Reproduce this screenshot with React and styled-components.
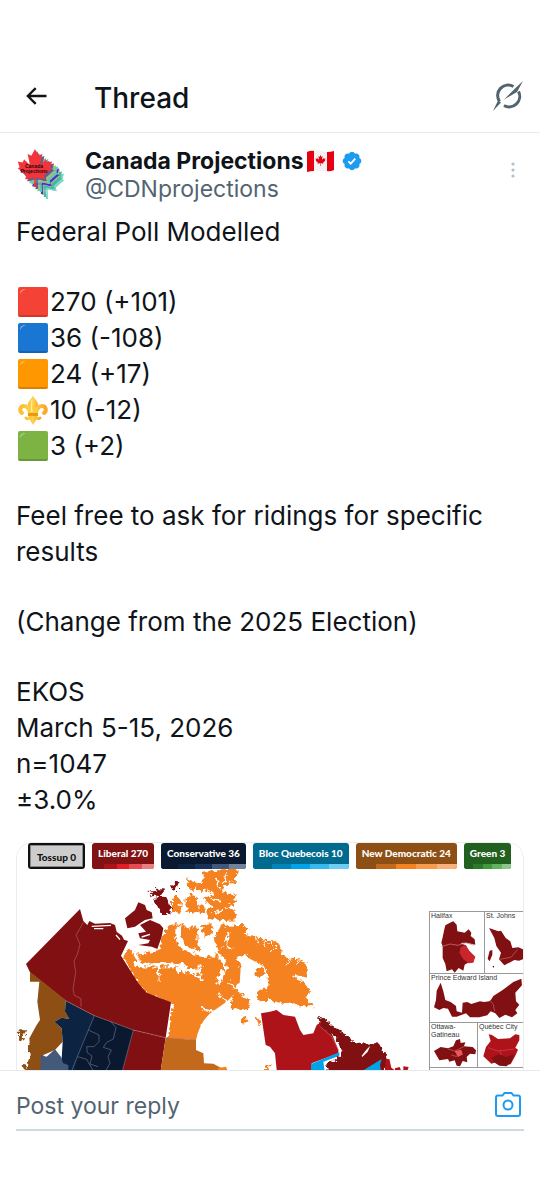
import React from "react";
import styled, { createGlobalStyle } from "styled-components";
import { FaCanadianMapleLeaf } from "react-icons/fa";

const GlobalStyle = createGlobalStyle`
  * {
    box-sizing: border-box;
  }

  body {
    margin: 0;
    background: #fff;
    color: #0f1419;
    font-family: Inter, "Liberation Sans", sans-serif;
  }
`;

const Page = styled.div`
  display: flex;
  flex-direction: column;
  height: 100vh;
  padding-top: 64px;
`;

const Header = styled.header`
  display: flex;
  align-items: center;
  flex: none;
  height: 69px;
  padding: 0 16px 4px 22px;
  border-bottom: 1px solid #e6eaed;

  h1 {
    flex: 1;
    margin: 4px 0 0 44px;
    font-size: 28px;
    line-height: 36px;
    font-weight: 500;
  }
`;

const IconButton = styled.button`
  display: flex;
  flex: none;
  padding: 0;
  border: 0;
  background: none;
  color: ${(props) => props.$color || "#0f1419"};
  cursor: pointer;
`;

const Post = styled.main`
  flex: 1;
  min-height: 0;
  overflow: hidden;
  padding: 14px 16px 0;
`;

const Author = styled.div`
  display: flex;
  align-items: flex-start;
  height: 67px;
`;

const Names = styled.div`
  flex: 1;
  margin-left: 17px;
  font-size: 23px;
  line-height: 28px;
`;

const Name = styled.div`
  display: flex;
  align-items: center;
  font-weight: 700;

  svg {
    margin-left: 2px;
  }

  svg:last-child {
    margin-left: 7px;
  }
`;

const Handle = styled.a`
  color: #536471;
  text-decoration: none;
`;

const More = styled(IconButton)`
  margin: 14px 8px 0 0;
`;

const Body = styled.div`
  display: flex;
  flex-direction: column;
  gap: 34px;
  font-size: 26px;
  line-height: 36px;

  p {
    margin: 0;
  }
`;

const Seat = styled.div`
  display: flex;
  align-items: center;
  height: 36px;
`;

const Media = styled.figure`
  position: relative;
  margin: 24px 0 0;
  overflow: hidden;
  border-radius: 16px;

  &::after {
    content: "";
    position: absolute;
    inset: 0;
    border: 1px solid #e9edf0;
    border-radius: 16px;
    pointer-events: none;
  }
`;

const MapImage = styled.svg`
  display: block;
  width: 100%;
`;

const Legend = styled.div`
  position: absolute;
  z-index: 1;
  top: 1px;
  left: 12px;
  display: flex;
  gap: 7px;
  font-family: Lato, "Open Sans", sans-serif;
  font-size: 10px;
  line-height: 21px;
  font-weight: 900;
  white-space: nowrap;
`;

const Tossup = styled.div`
  height: 26px;
  padding: 0 7px;
  border: 2px solid #111;
  border-radius: 3px;
  background: #cdcdcd;
  box-shadow: inset 0 0 0 1px #8a8a8a;
  color: #111;
  line-height: 24px;
`;

const Party = styled.div`
  overflow: hidden;
  height: 26px;
  border-radius: 3px;
  background: ${(props) => props.$color};
  color: #fff;

  span {
    display: block;
    padding: 0 6px;
  }
`;

const Shades = styled.div`
  display: grid;
  grid-template-columns: repeat(5, 1fr);
  height: 5px;
`;

const Shade = styled.i`
  background: ${(props) => props.$color};
`;

const Insets = styled.div`
  position: absolute;
  top: 69px;
  right: 0;
  width: 95px;
  border-left: 1px solid #999;
  background: #fff;
`;

const InsetRow = styled.div`
  display: grid;
  grid-template-columns: ${(props) => props.$columns};
  height: ${(props) => props.$height}px;
  border-top: 1px solid #999;
`;

const Inset = styled.div`
  display: grid;
  overflow: hidden;

  & + & {
    border-left: 1px solid #999;
  }

  span,
  svg {
    grid-area: 1 / 1;
  }

  span {
    padding-left: 1px;
    color: #333;
    font-family: "Liberation Sans", sans-serif;
    font-size: 7px;
    line-height: 8px;
    white-space: pre-line;
  }
`;

const Reply = styled.form`
  flex: none;
  height: 130px;
  padding: 12px 16px 0;
  border-top: 1px solid #e6eaed;
  background: #fff;
`;

const ReplyField = styled.div`
  display: flex;
  align-items: center;
  height: 48px;
  padding-right: 3px;
  border-bottom: 2px solid #cfd9e0;

  input {
    flex: 1;
    min-width: 0;
    padding: 0;
    border: 0;
    outline: 0;
    background: none;
    color: #0f1419;
    font: 400 23px/28px Inter, "Liberation Sans", sans-serif;
  }

  input::placeholder {
    color: #536471;
    opacity: 1;
  }

  button {
    padding-bottom: 4px;
  }
`;

const parties = [
  {
    name: "Liberal 270",
    shades: ["#811315", "#ae131a", "#e21e24", "#e54b50", "#ea7f82"]
  },
  {
    name: "Conservative 36",
    shades: ["#0a1930", "#0c2342", "#16325b", "#42587a", "#72829b"]
  },
  {
    name: "Bloc Quebecois 10",
    shades: ["#006a8f", "#0085ba", "#00a4e8", "#38b9ee", "#6dcdf5"]
  },
  {
    name: "New Democratic 24",
    shades: ["#8e4f15", "#c2691b", "#f58220", "#f79b4d", "#f9b27c"]
  },
  {
    name: "Green 3",
    shades: ["#21601f", "#2b7a2c", "#3f9a3a", "#62b25f", "#8cc68a"]
  }
];

const seats = [
  { color: "#f44336", text: "270 (+101)" },
  { color: "#1976d2", text: "36 (-108)" },
  { color: "#ff9800", text: "24 (+17)" },
  { text: "10 (-12)" },
  { color: "#7cb342", text: "3 (+2)" }
];

function Square({ color }) {
  return (
    <svg width="34" height="34" viewBox="0 0 34 34" aria-hidden="true">
      <rect x="2" y="2" width="30" height="30" rx="2" fill={color} />
      <path d="M2 30h30q0 2-2 2H4q-2 0-2-2z" fill="#000" opacity=".15" />
      <path d="M4 9q0-5 6-5-4 1-6 5z" fill="#fff" opacity=".5" />
    </svg>
  );
}

function FleurDeLis() {
  return (
    <svg width="34" height="34" viewBox="0 0 34 34" aria-hidden="true">
      <defs>
        <linearGradient id="gold" x2="1" y2="0">
          <stop offset="0" stopColor="#fbc02d" />
          <stop offset=".5" stopColor="#ffd54f" />
          <stop offset="1" stopColor="#f9a825" />
        </linearGradient>
      </defs>
      <path
        d="M17 2c1 4 5 6 5 10 0 4-3 6-4 10h-2c-1-4-4-6-4-10 0-4 4-6 5-10z"
        fill="url(#gold)"
      />
      <g fill="none" stroke="url(#gold)" strokeWidth="4" strokeLinecap="round">
        <path d="M14 21c0-5-3-8-6-8-4 0-5 5-2 7M20 21c0-5 3-8 6-8 4 0 5 5 2 7" />
        <path d="M14 24c-1 2-3 2-4 1M20 24c1 2 3 2 4 1" strokeWidth="3" />
      </g>
      <path d="M15 23h4l1 4-3 5-3-5z" fill="url(#gold)" />
      <path d="M12 20h10v3H12z" fill="#e89a13" />
      <path d="M16 7c-1 4-1 8 0 12" stroke="#fff3a8" strokeWidth="1" fill="none" />
    </svg>
  );
}

function Avatar() {
  const layers = [
    [12, 12, "#7ad7c4"],
    [10, 10, "#4bb3a5"],
    [8, 8, "#86c98b"],
    [7, 7, "#5a2bc4"],
    [6, 5, "#63c5b5"],
    [4, 4, "#91c48d"],
    [2, 2, "#6b5a8a"]
  ];

  return (
    <svg width="52" height="54" viewBox="0 0 52 54" aria-hidden="true">
      {layers.map(([x, y, color]) => (
        <FaCanadianMapleLeaf key={x} x={x} y={y + 2} size={38} color={color} />
      ))}
      <FaCanadianMapleLeaf x={0} y={2} size={38} color="#f5333a" />
      <g
        fill="#1c0a0c"
        fontFamily="Liberation Sans, sans-serif"
        fontWeight="700"
        fontSize="5"
        textAnchor="middle"
      >
        <text x="18" y="21">Canada</text>
        <text x="18" y="26">Projections</text>
      </g>
    </svg>
  );
}

function Flag() {
  return (
    <svg width="29" height="24" viewBox="0 0 29 24" aria-hidden="true">
      <path d="M1 3q7-3 14-1t13 0v19q-7 2-13 1t-14 1z" fill="#f2f2f2" />
      <path d="M1 3q4-2 7-1v20q-4 0-7 1zM21 3q4 0 7-1v19q-4 2-7 1z" fill="#e60012" />
      <FaCanadianMapleLeaf x={9} y={6} size={11} color="#e60012" />
    </svg>
  );
}

function CanadaMap() {
  // drawn at three units to the pixel
  return (
    <MapImage viewBox="48 21 1524 780" aria-label="Projected ridings map">
      <defs>
        <filter
          id="coast"
          x="-5%"
          y="-5%"
          width="110%"
          height="110%"
          colorInterpolationFilters="sRGB"
        >
          <feTurbulence baseFrequency="0.05" numOctaves="2" seed="8" />
          <feDisplacementMap
            in="SourceGraphic"
            scale="22"
            xChannelSelector="R"
            yChannelSelector="G"
          />
        </filter>
      </defs>
      <rect x="48" y="21" width="1524" height="780" fill="#fff" />

      <g fill="#f58220" filter="url(#coast)">
        <path d="M382 325L363 362 415 445 440 473 513 502 497 608 588 615 592 592 606 560 640 525 665 495 682 465 706 450 722 425 702 405 718 385 700 365 745 345 722 300 705 325 690 350 660 345 630 362 590 350 600 322 580 280 555 270 525 262 505 268 490 280 472 342 415 352z" />
        <path d="M662 270L700 265 725 264 740 278 722 290 750 295 785 308 815 310 832 328 840 352 860 365 890 366 914 378 914 422 868 412 914 445 924 465 908 478 938 508 890 508 840 495 800 488 766 490 768 468 800 450 796 410 776 380 750 375 730 350 700 362 655 362 640 350 668 330 656 300z" />
        <path d="M600 380L640 378 660 392 685 368 710 372 722 410 700 440 685 445 705 475 745 500 740 520 690 512 660 535 605 560 560 500z" />
        <path d="M605 103L706 103 704 140 668 145 660 165 700 175 700 205 665 212 700 218 704 250 660 252 622 246 612 220 636 205 605 190 636 170 605 150z" />
        <path d="M688 18L712 20 712 60 706 110 680 110z" />
        <path d="M555 125L572 132 585 150 575 165 560 150zM582 150L600 138 614 158 600 172zM550 188L585 183 590 224 560 228zM510 183L530 178 540 200 534 228 510 224zM590 200L608 205 606 234 590 225zM560 170l20 4-2 12-16-4z" />
        <path d="M550 285L580 262 592 290 585 325 560 320zM600 265L632 262 630 290 605 300zM650 270L668 265 665 330 645 345 638 300z" />
      </g>

      <g fill="none" stroke="#fff" filter="url(#coast)">
        <path d="M372 322Q425 365 404 376T480 385 540 395 600 400" strokeWidth="12" />
        <path d="M470 385l3 46M592 382l5 42M545 400l-10-20M570 405l30 25" strokeWidth="6" />
        <path d="M530 268Q520 320 565 340T630 345" strokeWidth="17" />
        <path d="M598 275Q580 320 615 350M640 268Q620 320 650 355T670 400M665 400l-14 40" strokeWidth="11" />
        <path d="M678 284Q668 320 690 335" strokeWidth="6" />
        <path d="M645 470l30 18M668 485l22 32M600 515l40 10M680 435l38 30" strokeWidth="5" />
        <path d="M760 300l8 22M784 306l8 22M805 312l8 18M825 330l-12 12M865 368l-10 14M890 370l-8 14" strokeWidth="3" />
        <path d="M640 120l14 36M672 112l-6 26M690 130l-12 18M625 185l30 6M640 228l22-8" strokeWidth="5" />
      </g>
      <path d="M588 615Q600 555 640 528L680 500 740 440Q770 420 790 450L768 470 770 495 830 500 850 525 800 530 783 535 797 630Q826 650 826 708L700 708 650 690 620 688 610 655 588 645z" fill="#fff" />
      <path d="M722 400L737 365 775 385 762 410 785 420 796 402 798 448 766 468 740 480 718 460z" fill="#fff" />
      <g fill="#f58220" filter="url(#coast)">
        <path d="M762 390l18 0 8 20-14 12-14-10zM720 540l14-5 2 18-18 8zM765 543l8-5 5 20-8 8zM695 455l52 40-8 26-54-6z" />
        <path d="M768 470l44-14 8 36-46 0zM790 690l16-8-4 20-14 6z" />
      </g>

      <g fill="#811013">
        <path d="M240 222L250 258 262 270 268 258 285 266 330 264 345 270 350 290 366 302 372 314 384 318 363 362 415 445 440 473 513 502 497 608 400 585 283 542 197 497 90 412 78 387z" />
        <path d="M415 202L435 210 440 225 455 232 458 250 435 255 420 265 405 275 382 280 375 250 405 225z" />
        <path d="M420 270L450 255 480 268 490 280 485 305 472 342 455 335 415 330 445 325 450 315 420 310 415 295 438 290z" />
      </g>
      <g fill="#811013" filter="url(#coast)">
        <path d="M442 168l23-13 25 3-12 14-24 6zM508 148l18-14 8 4-8 20-16 4zM455 188l20-8 24 6 9 24-3 18-20 6-10-18-16-12zM470 158l14 8-10 14-12-4z" />
      </g>
      <path d="M275 274l58-3M282 281l28 0M348 300l12 14M425 306l25-8" stroke="#fff" strokeWidth="4" />
      <g fill="#8e4f15">
        <path d="M90 410L197 495 195 530 208 552 185 548 163 560 185 580 188 620 165 645 130 660 130 801 70 801 85 690 92 660 88 610 110 570 120 555 112 500 118 440 90 440z" />
      </g>
      <g fill="#8e4f15" filter="url(#coast)">
        <path d="M50 578l14-5 8 8-8 24-12 8zM66 690l18-6 10 24-18 4z" />
        <path d="M86 610l22 0 0 90-20 0-8-30 12-14-14-20z" />
      </g>
      <path d="M197 497L283 542 400 585 367 801 205 801 185 672 188 620 185 580 163 560 185 548 208 552 195 530z" fill="#0c2342" />
      <path d="M283 542L400 585 367 801 205 801 232 665z" fill="#0a1930" />
      <path d="M122 660L140 665 165 643 185 668 188 684 205 690 207 801 122 801z" fill="#435a7a" />
      <path d="M400 585L497 608 482 708 475 801 350 801 367 708z" fill="#811013" />
      <path d="M497 608L588 615 588 645 610 655 612 685 640 686 680 708 680 801 470 801 482 708z" fill="#c2691b" />
      <path d="M654 699l24-4 8 20-30 0z" fill="#f58220" />
      <g fill="none" stroke="#b8767a" strokeWidth="2" opacity=".8">
        <path d="M250 262l-10 18-12 20 12 28-8 30-10 20 5 35-8 50 4 18 20 10v24M197 497l86 45 117 43 97 23 91 7" />
      </g>
      <g fill="none" stroke="#7a8aa3" strokeWidth="2" opacity=".8">
        <path d="M283 542l-51 123-17 43M400 585l-33 123M265 585l32 15v20l-15 15-22 0 2 18 14 10-6 24 24 8M232 665l28 8 20 35M332 560l16 18-8 34-20 10-10 15 24 8-10 20 6 20-14 24" />
      </g>

      <path d="M783 535L810 530 830 525 850 540 885 545 900 585 910 600 940 595 950 570 965 560 995 595 1015 645 1015 655 935 685 935 801 830 801 830 705 825 655 810 635 797 630z" fill="#ad1319" />
      <path d="M933 687L1018 652 1018 662 970 680 978 740 933 740z" fill="#00a2e8" />
      <g fill="#811013" filter="url(#coast)">
        <path d="M948 535L985 560 1025 590 1055 613 1090 622 1134 626 1160 660 1152 690 1150 801 1070 801 980 780 976 685 1022 652 1002 600 955 570z" />
      </g>
      <path d="M958 572L995 605 1015 645" fill="none" stroke="#c0666a" strokeWidth="2" />
      <path d="M1075 715L1145 672 1140 690 1148 740 1075 740z" fill="#00a2e8" />
      <path d="M1085 662l14-18 12-12-8 18-16 16z" fill="#fff" />
      <path d="M1158 672l10 0 6 26 14 10-34 6zM1185 700l14-4 4 10-18 6zM1210 694l16 2-4 12-12 2z" fill="#b0141a" />
    </MapImage>
  );
}

function CityInsets() {
  return (
    <Insets>
      <InsetRow $columns="54px 1fr" $height={62}>
        <Inset>
          <span>Halifax</span>
          <svg width="54" height="61" viewBox="0 0 162 183" fill="#811013">
            <path d="M46 40L60 32 70 28 80 38 82 58 104 62 116 52 124 62 122 72 134 82 136 98 116 94 98 92 84 98 60 94 38 102 34 92 38 76 42 56z" />
            <path d="M38 96l22-6 26 2 22 8 10 20-4 32-10 6-4 18-14-8-12 14-8-10-16 6-4-22-8-18z" />
            <path d="M92 106l14-8 12 18 18 18-6 18-14 2-16-12-12-20z" fill="#c9252c" />
            <path d="M34 104l26-8 24 4 24-8 24 8" fill="none" stroke="#c88" strokeWidth="2" />
          </svg>
        </Inset>
        <Inset>
          <span>St. Johns</span>
          <svg width="39" height="61" viewBox="0 0 117 183" fill="#811013">
            <path d="M12 48l28 10 8-2 14 22 14 10 6 20 18-2 18 8v26l-16 6-14-2-30 16-16-18 6-20-14-20-6-24z" />
            <path d="M14 116l8-2 0 14-8 20-6-8zM22 162l6 0-2 6z" />
            <path d="M44 142l34-6 20-24" fill="none" stroke="#c66" strokeWidth="2" />
          </svg>
        </Inset>
      </InsetRow>
      <InsetRow $columns="1fr" $height={49}>
        <Inset>
          <span>Prince Edward Island</span>
          <svg width="94" height="48" viewBox="0 0 282 144" fill="#811013">
            <path d="M32 26L40 52 46 78 62 84 78 96 80 112 96 116 98 86 112 84 124 90 150 82 162 84 178 82 184 76 190 66 218 48 250 24 274 14 276 34 256 56 258 82 268 92 256 108 262 118 246 130 226 122 208 132 196 118 182 112 172 124 148 130 120 130 108 118 96 122 80 128 66 128 54 104 40 102 28 108 12 100 18 78 20 50z" />
            <path d="M180 78l10 14 4 20" fill="none" stroke="#c66" strokeWidth="2" />
          </svg>
        </Inset>
      </InsetRow>
      <InsetRow $columns="47px 1fr" $height={45}>
        <Inset>
          <span>{"Ottawa-\nGatineau"}</span>
          <svg width="47" height="44" viewBox="0 0 141 132" fill="#811013">
            <path d="M12 84l20-12 22 4 16-6 8-18 12-4 2 12 14-2-4 12 26 2 10 10-2 12-16-2-10 10 2 16-14-4-8 16-10-2-6-16-16 4-4-8-26 4z" />
            <path d="M74 84l20-4 4 14-14 8z" fill="#f0575c" />
            <path d="M54 78l20 6 30-14M64 96l14 4 20-6" fill="none" stroke="#c66" strokeWidth="2" />
          </svg>
        </Inset>
        <Inset>
          <span>Québec City</span>
          <svg width="46" height="44" viewBox="0 0 138 132">
            <path d="M32 34l10 2 18 12 36-2 16-12 12 2 0 16-12 22 8 6-8 18-14 26-22 2-22-8-14 4-24-22 8-28 14-18z" fill="#ad1319" />
            <path d="M40 104l24-10 20 8 24-8-8 22-14 14-22-2-16-10z" fill="#811013" />
            <path d="M30 74l30 10 50-6M66 84l4 12" fill="none" stroke="#d46" strokeWidth="2" />
          </svg>
        </Inset>
      </InsetRow>
      <InsetRow $columns="1fr" $height={45} />
    </Insets>
  );
}

export default function App() {
  return (
    <Page>
      <GlobalStyle />
      <Header>
        <IconButton aria-label="Back">
          <svg width="28" height="28" viewBox="0 0 24 24" fill="currentColor">
            <path d="M7.414 13l5.043 5.04-1.414 1.42L3.586 12l7.457-7.46 1.414 1.42L7.414 11H21v2H7.414z" />
          </svg>
        </IconButton>
        <h1>Thread</h1>
        <IconButton aria-label="Grok" $color="#536471">
          <svg width="32" height="32" viewBox="0 0 32 32" fill="none">
            <path
              d="M7.500 21.500A10.500 10.500 0 0 1 21.500 6.500M26.500 11.500A10.500 10.500 0 0 1 12 25.500"
              stroke="currentColor"
              strokeWidth="3"
            />
            <path
              d="M31 1L25 12 12 19.500 23 8.500zM1 31L6 20.500 9 22.500z"
              fill="currentColor"
            />
          </svg>
        </IconButton>
      </Header>
      <Post>
        <Author>
          <Avatar />
          <Names>
            <Name>
              Canada Projections
              <Flag />
              <svg width="20" height="20" viewBox="1 1 22 22" aria-label="Verified">
                <path
                  fill="#1d9bf0"
                  d="M22.25 12c0-1.43-.88-2.67-2.19-3.34.46-1.39.2-2.9-.81-3.91s-2.52-1.27-3.91-.81c-.66-1.31-1.91-2.19-3.34-2.19s-2.67.88-3.33 2.19c-1.4-.46-2.91-.2-3.92.81s-1.26 2.52-.8 3.91c-1.31.67-2.2 1.91-2.2 3.34s.89 2.67 2.2 3.34c-.46 1.39-.21 2.9.8 3.91s2.52 1.26 3.91.81c.67 1.31 1.91 2.19 3.34 2.19s2.68-.88 3.34-2.19c1.39.45 2.9.2 3.91-.81s1.27-2.52.81-3.91c1.31-.67 2.19-1.91 2.19-3.34z"
                />
                <path d="M8 12.300l2.600 2.600 5-5.400" fill="none" stroke="#fff" strokeWidth="2" />
              </svg>
            </Name>
            <Handle href="#profile">@CDNprojections</Handle>
          </Names>
          <More aria-label="More" $color="#b3c0ca">
            <svg width="6" height="18" viewBox="0 0 6 18" fill="currentColor">
              <circle cx="3" cy="3" r="1.600" />
              <circle cx="3" cy="9" r="1.600" />
              <circle cx="3" cy="15" r="1.600" />
            </svg>
          </More>
        </Author>
        <Body>
          <p>Federal Poll Modelled</p>
          <div>
            {seats.map((seat) => (
              <Seat key={seat.text}>
                {seat.color ? <Square color={seat.color} /> : <FleurDeLis />}
                {seat.text}
              </Seat>
            ))}
          </div>
          <p>Feel free to ask for ridings for specific results</p>
          <p>(Change from the 2025 Election)</p>
          <p>
            EKOS
            <br />
            March 5-15, 2026
            <br />
            n=1047
            <br />
            ±3.0%
          </p>
        </Body>
        <Media>
          <CanadaMap />
          <CityInsets />
          <Legend>
            <Tossup>Tossup 0</Tossup>
            {parties.map((party) => (
              <Party key={party.name} $color={party.shades[0]}>
                <span>{party.name}</span>
                <Shades>
                  {party.shades.map((shade) => (
                    <Shade key={shade} $color={shade} />
                  ))}
                </Shades>
              </Party>
            ))}
          </Legend>
        </Media>
      </Post>
      <Reply>
        <ReplyField>
          <input type="text" placeholder="Post your reply" aria-label="Post your reply" />
          <IconButton type="button" aria-label="Add photo" $color="#1d9bf0">
            <svg
              width="26"
              height="26"
              viewBox="0 0 26 26"
              fill="none"
              stroke="currentColor"
              strokeWidth="2"
            >
              <path d="M3 4.500h4.500L9.500 2h7l2 2.500H23Q25 4.500 25 6.500V23q0 2-2 2H3q-2 0-2-2V6.500q0-2 2-2z" />
              <circle cx="13" cy="14" r="4.500" />
            </svg>
          </IconButton>
        </ReplyField>
      </Reply>
    </Page>
  );
}
